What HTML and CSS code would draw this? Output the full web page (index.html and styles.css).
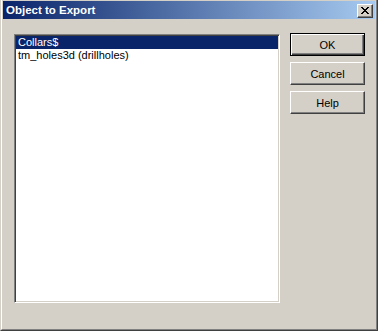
FILE: index.html
```html
<!DOCTYPE html>
<html lang="en">
<head>
    <meta charset="UTF-8">
    <title>Object to Export</title>
    <link rel="stylesheet" href="styles.css">
</head>
<body>
    <div class="window">
        <div class="frame">
            <div class="titlebar">
                <span class="title">Object to Export</span>
                <button class="close" aria-label="Close">
                    <svg width="8" height="7" viewBox="0 0 8 7" shape-rendering="crispEdges">
                        <path d="M0 0h2v1H0zM6 0h2v1H6zM1 1h2v1H1zM5 1h2v1H5zM2 2h4v1H2zM3 3h2v1H3zM2 4h4v1H2zM1 5h2v1H1zM5 5h2v1H5zM0 6h2v1H0zM6 6h2v1H6z" fill="#000"/>
                    </svg>
                </button>
            </div>
            <div class="content">
                <div class="listbox">
                    <div class="item selected">Collars$</div>
                    <div class="item">tm_holes3d (drillholes)</div>
                </div>
                <div class="buttons">
                    <button class="btn default">OK</button>
                    <button class="btn">Cancel</button>
                    <button class="btn">Help</button>
                </div>
            </div>
        </div>
    </div>
</body>
</html>
```

FILE: styles.css
```css
html, body {
    margin: 0;
    padding: 0;
}
body {
    font-family: "Liberation Sans", Arial, sans-serif;
    font-size: 11px;
    background: #d4d0c8;
}
.window {
    box-sizing: border-box;
    width: 378px;
    height: 331px;
    background: #d4d0c8;
    border-left: 1px solid #d4d0c8;
    border-right: 1px solid #404040;
    border-bottom: 1px solid #404040;
}
.frame {
    box-sizing: border-box;
    height: 100%;
    border-left: 1px solid #fff;
    border-right: 1px solid #808080;
    border-bottom: 1px solid #808080;
    padding: 1px 1px 0 1px;
}
.titlebar {
    height: 18px;
    display: flex;
    align-items: center;
    justify-content: space-between;
    padding: 0 2px 0 3px;
    background: linear-gradient(to right, #0a246a, #a6caf0);
}
.title {
    color: #fff;
    font-weight: bold;
    font-size: 11.5px;
}
.close {
    box-sizing: border-box;
    width: 16px;
    height: 14px;
    margin-top: 1px;
    padding: 0;
    display: flex;
    align-items: center;
    justify-content: center;
    background: #d4d0c8;
    border: 1px solid;
    border-color: #fff #404040 #404040 #fff;
    box-shadow: inset -1px -1px #808080;
}
.content {
    display: flex;
    gap: 10px;
    padding: 14px 0 0 11px;
}
.listbox {
    box-sizing: border-box;
    width: 266px;
    height: 269px;
    margin-top: 1px;
    background: #fff;
    border: 1px solid;
    border-color: #808080 #fff #fff #808080;
    box-shadow: inset 1px 1px #404040, inset -1px -1px #d4d0c8;
    padding: 1px;
}
.item {
    height: 13px;
    line-height: 13px;
    padding-left: 2px;
    color: #000;
    white-space: nowrap;
}
.item.selected {
    background: #0a246a;
    color: #fff;
}
.buttons {
    display: flex;
    flex-direction: column;
    gap: 6px;
}
.btn {
    box-sizing: border-box;
    width: 75px;
    height: 23px;
    padding: 0;
    font-family: "Liberation Sans", Arial, sans-serif;
    font-size: 11px;
    color: #000;
    background: #d4d0c8;
    border: 1px solid;
    border-color: #fff #404040 #404040 #fff;
    box-shadow: inset -1px -1px #808080;
}
.btn.default {
    border-color: #000;
    box-shadow: inset 1px 1px #fff, inset -1px -1px #404040, inset -2px -2px #808080;
}
```
